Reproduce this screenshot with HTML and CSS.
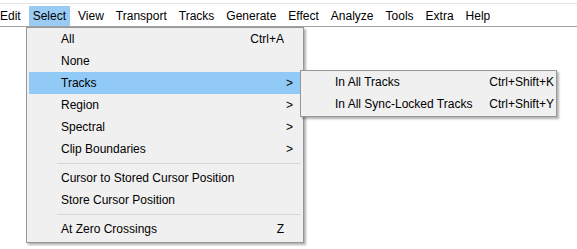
FILE: index.html
```html
<!DOCTYPE html>
<html lang="en">
  <head>
    <meta charset="UTF-8" />
    <meta name="viewport" content="width=device-width, initial-scale=1.0" />
    <title>Select menu</title>
    <link rel="stylesheet" href="styles.css">
  </head>
  <body>
    <div class="window">
      <div class="menubar">
        <div class="bar-item">Edit</div>
        <div class="bar-item open">Select</div>
        <div class="bar-item">View</div>
        <div class="bar-item">Transport</div>
        <div class="bar-item">Tracks</div>
        <div class="bar-item">Generate</div>
        <div class="bar-item">Effect</div>
        <div class="bar-item">Analyze</div>
        <div class="bar-item">Tools</div>
        <div class="bar-item">Extra</div>
        <div class="bar-item">Help</div>
      </div>
      <div class="content"></div>

      <div class="menu select-menu">
        <div class="item"><span class="label">All</span><span class="key">Ctrl+A</span><span class="arrow"></span></div>
        <div class="item"><span class="label">None</span><span class="key"></span><span class="arrow"></span></div>
        <div class="item active"><span class="label">Tracks</span><span class="key"></span><span class="arrow">&gt;</span></div>
        <div class="item"><span class="label">Region</span><span class="key"></span><span class="arrow">&gt;</span></div>
        <div class="item"><span class="label">Spectral</span><span class="key"></span><span class="arrow">&gt;</span></div>
        <div class="item"><span class="label">Clip Boundaries</span><span class="key"></span><span class="arrow">&gt;</span></div>
        <div class="separator"></div>
        <div class="item"><span class="label">Cursor to Stored Cursor Position</span><span class="key"></span><span class="arrow"></span></div>
        <div class="item"><span class="label">Store Cursor Position</span><span class="key"></span><span class="arrow"></span></div>
        <div class="separator"></div>
        <div class="item"><span class="label">At Zero Crossings</span><span class="key">Z</span><span class="arrow"></span></div>
      </div>

      <div class="menu sub-menu">
        <div class="item"><span class="label">In All Tracks</span><span class="key">Ctrl+Shift+K</span></div>
        <div class="item"><span class="label">In All Sync-Locked Tracks</span><span class="key">Ctrl+Shift+Y</span></div>
      </div>
    </div>
  </body>
</html>
```
FILE: styles.css
```css
body {
  margin: 0;
  background-color: #fff;
  font-family: "Liberation Sans", Arial, sans-serif;
  font-size: 12px;
  color: #000;
}

.window {
  position: relative;
  height: 249px;
  overflow: hidden;
  padding-top: 3px;
}

.menubar {
  display: flex;
  height: 23px;
  padding-top: 2px;
  margin-left: -6px;
  border-top: 1px solid #e3e3e3;
  box-sizing: border-box;
}

.bar-item {
  height: 20px;
  line-height: 20px;
  padding: 0 6px;
}

.bar-item.open {
  background-color: #99cbf5;
  padding: 0 4px;
  margin: 0 2px;
}

.content {
  height: 220px;
  border-top: 1px solid #a0a0a0;
}

.menu {
  position: absolute;
  background-color: #f0f0f0;
  border: 1px solid #979797;
  padding: 0 2px;
  box-sizing: border-box;
  box-shadow: 2px 2px 2px rgba(0, 0, 0, 0.3);
}

.select-menu {
  left: 26px;
  top: 27px;
  width: 278px;
  padding-bottom: 2px;
}

.sub-menu {
  left: 300px;
  top: 70px;
  width: 257px;
  padding-bottom: 1px;
}

.item {
  display: flex;
  height: 22px;
  line-height: 22px;
  padding-left: 32px;
}

.item.active {
  background-color: #91c9f7;
}

.label {
  flex: 1;
  white-space: nowrap;
}

.key {
  text-align: right;
  white-space: nowrap;
}

.arrow {
  width: 15px;
  padding-left: 2px;
}

.sub-menu .item {
  padding-right: 0;
}

.separator {
  height: 1px;
  margin: 3px 0 3px 28px;
  background-color: #d7d7d7;
}
```
